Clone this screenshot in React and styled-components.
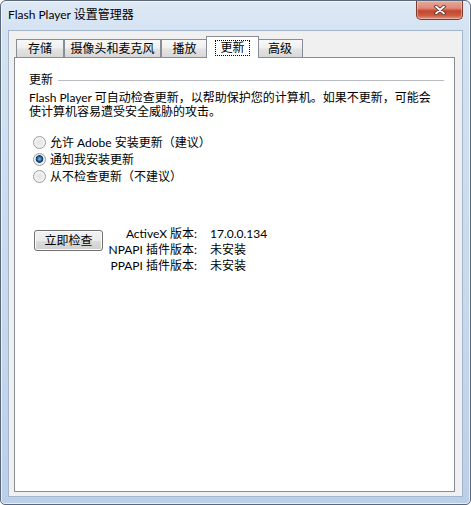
import React from "react";
import styled, { createGlobalStyle } from "styled-components";

const GlobalStyle = createGlobalStyle`
  html, body {
    margin: 0;
    padding: 0;
    background: #ffffff;
  }
  body {
    font-family: Lato, "Noto Sans CJK SC", sans-serif;
    font-size: 12px;
    color: #000;
  }
`;

const tabs = [
  { label: "存储", width: 48 },
  { label: "摄像头和麦克风", width: 97 },
  { label: "播放", width: 47 },
  { label: "更新", width: 49, active: true },
  { label: "高级", width: 46 }
];

const options = [
  { label: "允许 Adobe 安装更新（建议）" },
  { label: "通知我安装更新", checked: true },
  { label: "从不检查更新（不建议）" }
];

const versions = [
  ["ActiveX 版本:", "17.0.0.134"],
  ["NPAPI 插件版本:", "未安装"],
  ["PPAPI 插件版本:", "未安装"]
];

export default function App() {
  return (
    <>
      <GlobalStyle />
      <Window>
        <TitleBar>
          <Title>Flash Player 设置管理器</Title>
          <CloseButton>
            <svg width="12" height="10" viewBox="0 0 12 10">
              <path d="M2 1.5 L10 8.5 M10 1.5 L2 8.5" stroke="#4a2a2a" strokeWidth="3.4" strokeLinecap="round" />
              <path d="M2 1.5 L10 8.5 M10 1.5 L2 8.5" stroke="#ffffff" strokeWidth="1.8" strokeLinecap="round" />
            </svg>
          </CloseButton>
        </TitleBar>
        <Client>
          <TabRow>
            {tabs.map(t => (
              <Tab key={t.label} $width={t.width} $active={t.active}>
                {t.active ? <Focus>{t.label}</Focus> : t.label}
              </Tab>
            ))}
          </TabRow>
          <Panel>
            <Heading>
              <span>更新</span>
              <Rule />
            </Heading>
            <Paragraph>
              <Line>Flash Player 可自动检查更新，以帮助保护您的计算机。如果不更新，可能会</Line>
              <Line>使计算机容易遭受安全威胁的攻击。</Line>
            </Paragraph>
            <Options>
              {options.map(o => (
                <OptionRow key={o.label}>
                  <Radio $checked={o.checked} />
                  <span>{o.label}</span>
                </OptionRow>
              ))}
            </Options>
            <CheckRow>
              <Button>立即检查</Button>
              <VersionGrid>
                {versions.map(([k, v]) => (
                  <React.Fragment key={k}>
                    <VersionLabel>{k}</VersionLabel>
                    <span>{v}</span>
                  </React.Fragment>
                ))}
              </VersionGrid>
            </CheckRow>
          </Panel>
        </Client>
      </Window>
    </>
  );
}

const Window = styled.div`
  box-sizing: border-box;
  width: 471px;
  height: 505px;
  display: flex;
  flex-direction: column;
  padding: 0 7px 7px 7px;
  border: 1px solid #59687a;
  border-radius: 6px 6px 5px 5px;
  background: linear-gradient(to bottom, #dfe9f5 0px, #d4e2f2 30px, #c8d9ee 60%, #bccfe8 100%);
  box-shadow: inset 0 0 0 1px rgba(255, 255, 255, 0.65);
  overflow: hidden;
`;

const TitleBar = styled.div`
  height: 29px;
  flex: none;
  display: flex;
  align-items: flex-start;
`;

const Title = styled.div`
  line-height: 16px;
  margin-top: 6px;
  color: #000;
`;

const CloseButton = styled.div`
  margin-left: auto;
  box-sizing: border-box;
  width: 47px;
  height: 19px;
  display: flex;
  align-items: center;
  justify-content: center;
  border: 1px solid #7b3a32;
  border-top: none;
  border-radius: 0 0 5px 5px;
  background: linear-gradient(to bottom, #e9a99a 0%, #dc8a78 40%, #c6452d 55%, #cd5a40 80%, #e09a84 100%);
  box-shadow: inset 0 0 0 1px rgba(255, 220, 210, 0.45);
`;

const Client = styled.div`
  flex: 1;
  box-sizing: border-box;
  display: flex;
  flex-direction: column;
  padding: 5px 7px 4px 5px;
  background: #f0f0f0;
  border: 1px solid #a4b6cb;
`;

const TabRow = styled.div`
  display: flex;
  align-items: flex-end;
  height: 21px;
  padding-left: 2px;
`;

const Tab = styled.div`
  box-sizing: border-box;
  position: relative;
  width: ${p => (p.$active ? p.$width + 4 : p.$width)}px;
  height: ${p => (p.$active ? 22 : 18)}px;
  margin: 0 ${p => (p.$active ? -2 : 0)}px ${p => (p.$active ? -1 : 0)}px;
  z-index: ${p => (p.$active ? 2 : 1)};
  display: flex;
  align-items: ${p => (p.$active ? "flex-start" : "center")};
  justify-content: center;
  padding-top: ${p => (p.$active ? 3 : 1)}px;
  border: 1px solid #898c95;
  border-bottom: none;
  background: ${p =>
    p.$active
      ? "#ffffff"
      : "linear-gradient(to bottom, #f8f8f8 0%, #f0f0f0 45%, #e3e3e3 55%, #d8d8d8 100%)"};
  line-height: 14px;
  white-space: nowrap;
`;

const Focus = styled.span`
  display: block;
  padding: 0 4px;
  height: 14px;
  line-height: 14px;
  border: 1px dotted #000;
`;

const Panel = styled.div`
  flex: 1;
  box-sizing: border-box;
  display: flex;
  flex-direction: column;
  padding: 14px 10px 0 14px;
  background: #ffffff;
  border: 1px solid #898c95;
`;

const Heading = styled.div`
  display: flex;
  align-items: center;
  gap: 5px;
  height: 16px;
  line-height: 16px;
`;

const Rule = styled.div`
  flex: 1;
  height: 0;
  border-top: 1px solid #b8bcc2;
  margin-top: 1px;
`;

const Paragraph = styled.div`
  margin-top: 3px;
  display: flex;
  flex-direction: column;
`;

const Line = styled.div`
  height: 14px;
  line-height: 14px;
  white-space: nowrap;
`;

const Options = styled.div`
  margin-top: 15px;
  padding-left: 4px;
  display: flex;
  flex-direction: column;
`;

const OptionRow = styled.div`
  display: flex;
  align-items: center;
  gap: 4px;
  height: 17px;
  line-height: 17px;
`;

const Radio = styled.span`
  box-sizing: border-box;
  width: 13px;
  height: 13px;
  flex: none;
  border-radius: 50%;
  border: 1px solid #9a9c9e;
  background: ${p =>
    p.$checked
      ? "radial-gradient(circle at 50% 45%, #7cc0f0 0, #2d6fae 2px, #0e2f55 3.5px, #eef0f2 4.2px, #dcdee0 100%)"
      : "radial-gradient(circle at 50% 50%, #e2e3e4 0, #eceded 45%, #f9f9f9 100%)"};
  box-shadow: inset 0 0 0 1px #f4f4f4;
`;

const CheckRow = styled.div`
  display: flex;
  align-items: flex-start;
  margin-top: 41px;
`;

const Button = styled.div`
  box-sizing: border-box;
  width: 69px;
  height: 21px;
  margin: 4px 0 0 5px;
  display: flex;
  align-items: center;
  justify-content: center;
  border: 1px solid #707070;
  border-radius: 3px;
  background: linear-gradient(to bottom, #f2f2f2 0%, #ebebeb 50%, #dddddd 50%, #cfcfcf 100%);
  box-shadow: inset 0 0 0 1px #fcfcfc;
  line-height: 14px;
`;

const VersionGrid = styled.div`
  display: grid;
  grid-template-columns: 84px auto;
  column-gap: 13px;
  margin-left: 10px;
  line-height: 16px;
`;

const VersionLabel = styled.span`
  justify-self: end;
  white-space: nowrap;
`;
